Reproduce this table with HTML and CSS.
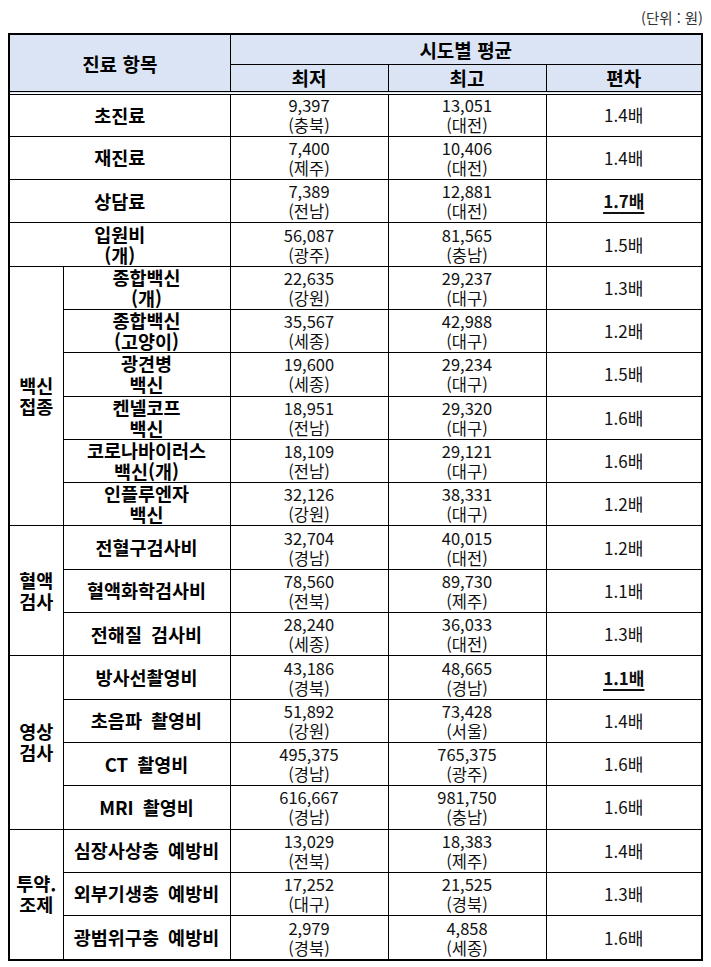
FILE: index.html
```html
<!DOCTYPE html>
<html lang="ko">
<head>
<meta charset="utf-8">
<title>진료 항목별 시도별 평균</title>
<link rel="stylesheet" href="styles.css">
</head>
<body>
<div class="page">
  <div class="unit">(단위 : 원)</div>
  <div class="frame">
    <table class="grid">
      <colgroup>
        <col class="c1"><col class="c2"><col class="c3"><col class="c4"><col class="c5">
      </colgroup>
      <thead>
        <tr class="h1">
          <th colspan="2" rowspan="2" class="hd">진료 항목</th>
          <th colspan="3" class="hd">시도별 평균</th>
        </tr>
        <tr class="h2">
          <th class="hd">최저</th>
          <th class="hd">최고</th>
          <th class="hd">편차</th>
        </tr>
      </thead>
      <tbody>
        <tr><td colspan="2" class="item">초진료</td><td class="num">9,397<br>(충북)</td><td class="num">13,051<br>(대전)</td><td class="dev">1.4배</td></tr>
        <tr><td colspan="2" class="item">재진료</td><td class="num">7,400<br>(제주)</td><td class="num">10,406<br>(대전)</td><td class="dev">1.4배</td></tr>
        <tr><td colspan="2" class="item">상담료</td><td class="num">7,389<br>(전남)</td><td class="num">12,881<br>(대전)</td><td class="dev"><span class="hi">1.7배</span></td></tr>
        <tr><td colspan="2" class="item">입원비<br>(개)</td><td class="num">56,087<br>(광주)</td><td class="num">81,565<br>(충남)</td><td class="dev">1.5배</td></tr>

        <tr><td rowspan="6" class="group">백신<br>접종</td><td class="item">종합백신<br>(개)</td><td class="num">22,635<br>(강원)</td><td class="num">29,237<br>(대구)</td><td class="dev">1.3배</td></tr>
        <tr><td class="item">종합백신<br>(고양이)</td><td class="num">35,567<br>(세종)</td><td class="num">42,988<br>(대구)</td><td class="dev">1.2배</td></tr>
        <tr><td class="item">광견병<br>백신</td><td class="num">19,600<br>(세종)</td><td class="num">29,234<br>(대구)</td><td class="dev">1.5배</td></tr>
        <tr><td class="item">켄넬코프<br>백신</td><td class="num">18,951<br>(전남)</td><td class="num">29,320<br>(대구)</td><td class="dev">1.6배</td></tr>
        <tr><td class="item">코로나바이러스<br>백신(개)</td><td class="num">18,109<br>(전남)</td><td class="num">29,121<br>(대구)</td><td class="dev">1.6배</td></tr>
        <tr><td class="item">인플루엔자<br>백신</td><td class="num">32,126<br>(강원)</td><td class="num">38,331<br>(대구)</td><td class="dev">1.2배</td></tr>

        <tr><td rowspan="3" class="group">혈액<br>검사</td><td class="item">전혈구검사비</td><td class="num">32,704<br>(경남)</td><td class="num">40,015<br>(대전)</td><td class="dev">1.2배</td></tr>
        <tr><td class="item">혈액화학검사비</td><td class="num">78,560<br>(전북)</td><td class="num">89,730<br>(제주)</td><td class="dev">1.1배</td></tr>
        <tr><td class="item">전해질 검사비</td><td class="num">28,240<br>(세종)</td><td class="num">36,033<br>(대전)</td><td class="dev">1.3배</td></tr>

        <tr><td rowspan="4" class="group">영상<br>검사</td><td class="item">방사선촬영비</td><td class="num">43,186<br>(경북)</td><td class="num">48,665<br>(경남)</td><td class="dev"><span class="hi">1.1배</span></td></tr>
        <tr><td class="item">초음파 촬영비</td><td class="num">51,892<br>(강원)</td><td class="num">73,428<br>(서울)</td><td class="dev">1.4배</td></tr>
        <tr><td class="item">CT 촬영비</td><td class="num">495,375<br>(경남)</td><td class="num">765,375<br>(광주)</td><td class="dev">1.6배</td></tr>
        <tr><td class="item">MRI 촬영비</td><td class="num">616,667<br>(경남)</td><td class="num">981,750<br>(충남)</td><td class="dev">1.6배</td></tr>

        <tr><td rowspan="3" class="group">투약.<br>조제</td><td class="item">심장사상충 예방비</td><td class="num">13,029<br>(전북)</td><td class="num">18,383<br>(제주)</td><td class="dev">1.4배</td></tr>
        <tr><td class="item">외부기생충 예방비</td><td class="num">17,252<br>(대구)</td><td class="num">21,525<br>(경북)</td><td class="dev">1.3배</td></tr>
        <tr><td class="item">광범위구충 예방비</td><td class="num">2,979<br>(경북)</td><td class="num">4,858<br>(세종)</td><td class="dev">1.6배</td></tr>
      </tbody>
    </table>
  </div>
</div>
</body>
</html>
```

FILE: styles.css
```css
html, body {
  margin: 0;
  padding: 0;
  background: #ffffff;
}

body {
  font-family: "Noto Sans CJK KR", "Noto Sans", sans-serif;
  color: #000;
}

.page {
  width: 711px;
  padding: 0 8px;
  box-sizing: border-box;
}

.unit {
  height: 33px;
  box-sizing: border-box;
  padding-top: 9px;
  text-align: right;
  font-size: 14.5px;
  line-height: 18px;
  color: #333;
}

.frame {
  width: 695px;
  box-sizing: border-box;
  border: 2px solid #000;
}

.grid {
  width: 100%;
  table-layout: fixed;
  border-collapse: collapse;
  border-style: hidden;
}

.c1 { width: 53px; }
.c2 { width: 167px; }
.c3 { width: 158px; }
.c4 { width: 158px; }
.c5 { width: 155px; }

.grid th,
.grid td {
  border: 1px solid #000;
  padding: 0;
  text-align: center;
  vertical-align: middle;
}

.hd {
  background: #dbe4f4;
  font-size: 19px;
  font-weight: 700;
  line-height: 23px;
}

.h1 { height: 29px; }
.h2 { height: 29px; }

.h2 th,
.h1 th[rowspan] {
  border-bottom: 4px double #000;
}

.grid tbody tr {
  height: 43.3px;
}

.item {
  font-size: 18.5px;
  font-weight: 700;
  line-height: 21px;
  word-spacing: 4px;
}

.group {
  font-size: 18.5px;
  font-weight: 700;
  line-height: 21px;
}

.num {
  font-size: 16.5px;
  line-height: 20px;
  color: #111;
}

.dev {
  font-size: 17px;
  line-height: 20px;
  color: #111;
}

.hi {
  font-weight: 700;
  text-decoration: underline;
  text-decoration-thickness: 2px;
  text-underline-offset: 4px;
}
```
